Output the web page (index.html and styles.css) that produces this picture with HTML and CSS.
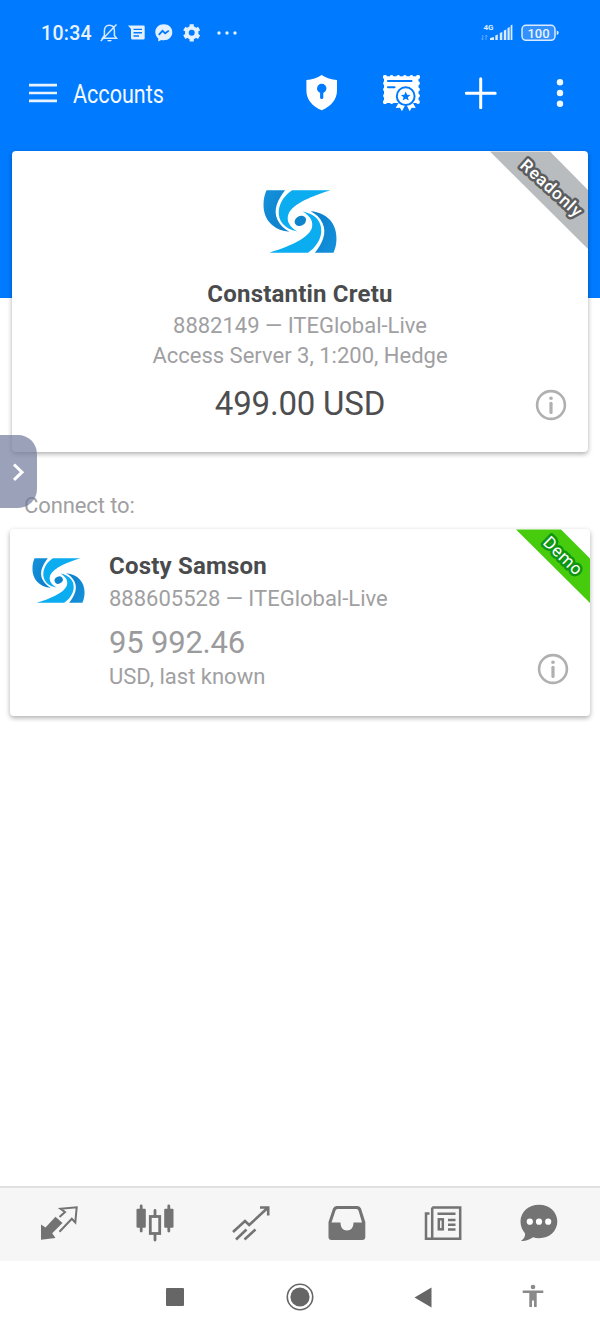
FILE: index.html
```html
<!DOCTYPE html>
<html lang="en">
<head>
<meta charset="utf-8">
<title>Accounts</title>
<link rel="stylesheet" href="styles.css">
</head>
<body>
<svg width="0" height="0" class="defs">
  <defs>
    <linearGradient id="dk" x1="0" y1="0" x2="1" y2="1"><stop offset="0" stop-color="#1592dc"/><stop offset="1" stop-color="#0a7cc8"/></linearGradient>
    <g id="half">
      <path fill="url(#dk)" d="M79 45H135C113 73 98 104 112 134C120 151 132 162 148 170C98 166 69 132 70 88C70 70 74 56 79 45Z"/>
      <path fill="#0badf0" d="M156 45H272C221 61 159 84 145 117C138 137 148 155 172 169C134 162 113 138 116 106C119 81 134 60 156 45Z"/>
    </g>
    <symbol id="logo" viewBox="69 44 222 190">
      <use href="#half"/>
      <use href="#half" transform="rotate(180 180 139)"/>
      <ellipse cx="180" cy="138" rx="27" ry="22" fill="#fff" transform="rotate(-30 180 138)"/>
      <ellipse cx="181" cy="137" rx="18" ry="14.500" fill="#0d84cc" transform="rotate(-30 181 137)"/>
    </symbol>
    <symbol id="info" viewBox="0 0 32 32">
      <circle cx="16" cy="16" r="13.900" fill="none" stroke="#b0b0b0" stroke-width="2.600"/>
      <circle cx="16" cy="9.200" r="1.800" fill="#b0b0b0"/>
      <path d="M16 14.300V23.400" stroke="#b0b0b0" stroke-width="3.200" stroke-linecap="round"/>
    </symbol>
  </defs>
</svg>
<div class="screen">
  <header class="status">
    <span class="clock">10:34</span>
    <svg class="status-icons" width="140" height="24" viewBox="100 21 140 24" fill="#e2f0ff">
      <g fill="none" stroke="#d5e9ff" stroke-width="1.500">
        <path d="M102.500 38.200H116.500L114.400 35.500V30.500C114.400 27 112.300 25.200 109.300 25.200S104.400 27.500 104.400 30.500V35.500ZM100.800 41L116.500 24.400"/>
      </g>
      <path d="M107 40h5q-2.500 3-5 0Z"/>
      <path fill-rule="evenodd" d="M128 25.500H143.500q1.200 0 1.200 1.200V38q0 1.500-1.500 1.500H132.500q-1.500 0-1.500-1.500V29ZM133.500 28.700v1.400h8.500v-1.400ZM133.500 32v1.400h8.500V32ZM133.500 35.300v1.400h5.500v-1.400Z"/>
      <path d="M163.800 24.300c-5 0-8.500 3.500-8.500 8 0 2.600 1.200 4.700 3 6.200v3l3-1.500c.8.200 1.700.3 2.500.3 5 0 8.500-3.500 8.500-8s-3.500-8-8.500-8Z"/>
      <path d="M158.800 34.800l3.700-4 2.700 2.500 3.600-2.700" fill="none" stroke="#007aff" stroke-width="1.800"/>
      <circle cx="191.700" cy="32.800" r="4.900" fill="none" stroke="#e2f0ff" stroke-width="3.800"/>
      <path d="M191.700 24.200v3M191.700 38.400v3M184.300 28.500l2.500 1.500M196.600 35.600l2.500 1.500M184.300 37.100l2.500-1.500M196.600 30l2.500-1.500" stroke="#e2f0ff" stroke-width="4.200"/>
      <circle cx="219" cy="33" r="1.700"/><circle cx="227" cy="33" r="1.700"/><circle cx="235" cy="33" r="1.700"/>
    </svg>
    <svg class="signal" width="80" height="24" viewBox="480 21 80 24" fill="#d9ebff">
      <text x="483.500" y="29.700" class="net">4G</text>
      <path d="M490 40v-2l4-1v3ZM495.300 40v-4.500l2.500-1V40ZM499.800 40v-7l2.500-1v8ZM503.800 40v-9.500l2.500-1V40ZM507.500 40V28l2.200-1V40ZM510.600 40V25.500l1.800-1V40Z"/>
      <path d="M482.800 35v5l-1.500-1.500M486 40v-5l1.500 1.500" fill="none" stroke="#7bb9ff" stroke-width=".8"/>
      <rect x="522" y="25.300" width="33" height="15" rx="4" fill="#3290ff" stroke="#d9ebff" stroke-width="1.500"/>
      <path d="M556.700 30.500q2 .3 2 2.300t-2 2.300Z"/>
      <text x="538.500" y="37.600" text-anchor="middle" class="battery">100</text>
    </svg>
  </header>
  <div class="toolbar">
    <svg class="menu" width="28" height="20" viewBox="0 0 28 20"><path d="M0 2.100H28M0 10H28M0 17.900H28" stroke="#e8f3ff" stroke-width="2.700"/></svg>
    <h1><span>Accounts</span></h1>
    <div class="actions">
      <svg width="36" height="38" viewBox="304 74 36 38"><path fill="#fff" d="M321.700 74.900Q328.500 79.200 337 80V90.500C337 99.500 331 106.500 321.700 110.200C312.300 106.500 306.400 99.500 306.400 90.500V80Q314.900 79.200 321.700 74.900Z"/><circle cx="321.700" cy="88.500" r="4.700" fill="#007aff"/><path d="M321.700 89v8.500" stroke="#007aff" stroke-width="3.200" stroke-linecap="round"/></svg>
      <svg width="40" height="38" viewBox="381 74 40 38">
        <rect x="384" y="76.300" width="34.500" height="26.700" fill="#fff"/>
        <g fill="none" stroke="#fff" stroke-width="3.800" stroke-linecap="round"><path d="M385 77H418.500M385 102H397" stroke-dasharray="0.010 6.600"/><path d="M385 77V103M418 77V103" stroke-dasharray="0.010 6.240"/></g>
        <path d="M388 81H411.500M388 87.300H394.500" stroke="#007aff" stroke-width="2.100" stroke-linecap="round"/>
        <path d="M399 102l-3.300 6 4.200-.2 2 3.400 3.500-6.500h1l3.300 6.500 2-3.400 4 .2-3.500-6.500Z" fill="#fff"/>
        <circle cx="405.700" cy="96.200" r="8.900" fill="#fff" stroke="#007aff" stroke-width="2"/>
        <path fill="#007aff" d="M405.700 91.600l1.400 3.100 3.400.3-2.600 2.200.8 3.300-3-1.700-3 1.700.8-3.300-2.600-2.200 3.400-.3Z"/>
      </svg>
      <svg width="32" height="32" viewBox="0 0 32 32"><path d="M15.700 1.800V30.800M1.200 16.300H30.200" stroke="#fff" stroke-width="3" stroke-linecap="round"/></svg>
      <svg width="8" height="30" viewBox="0 0 8 30" fill="#f2f8ff"><circle cx="4" cy="4.200" r="3.200"/><circle cx="4" cy="15" r="3.200"/><circle cx="4" cy="25.800" r="3.200"/></svg>
    </div>
  </div>
  <main>
    <section class="card current">
      <svg class="logo"><use href="#logo"/></svg>
      <h2>Constantin Cretu</h2>
      <p class="line">8882149 — ITEGlobal-Live</p>
      <p class="line second">Access Server 3, 1:200, Hedge</p>
      <p class="balance">499.00 USD</p>
      <svg class="info"><use href="#info"/></svg>
      <svg class="ribbon" width="98" height="98" viewBox="490 151 98 98"><path fill="#b9bcbe" d="M490 151.500H550L588 190V249Z"/><text class="readonly" transform="translate(551.500 188.500) rotate(42)" text-anchor="middle" y="5.500">Readonly</text></svg>
    </section>
    <p class="connect">Connect to:</p>
    <section class="card other">
      <svg class="logo"><use href="#logo"/></svg>
      <div class="details">
        <h2>Costy Samson</h2>
        <p class="line">888605528 — ITEGlobal-Live</p>
        <p class="balance">95 992.46</p>
        <p class="line known">USD, last known</p>
      </div>
      <svg class="info"><use href="#info"/></svg>
      <svg class="ribbon" width="74" height="74" viewBox="516 529 74 74"><path fill="#46cb0d" d="M516 529.500H561L590 558.500V603Z"/><text class="demo" transform="translate(563 556) rotate(44)" text-anchor="middle" y="5.500">Demo</text></svg>
    </section>
  </main>
  <nav class="tabs">
    <svg width="40" height="40" viewBox="39.500 1203 40 40"><path fill="#737373" d="M41.500 1224.500L46 1227.500 56 1216.700 63 1223 52.700 1233.300 56 1238 41.500 1239.800Z"/><path d="M60 1217L65.500 1212 61 1208.700 77.200 1207.300 75.800 1222.500 72.300 1218.700 60 1231.800" fill="none" stroke="#737373" stroke-width="2"/></svg>
    <svg width="40" height="40" viewBox="135.500 1203 40 40"><g fill="#737373"><rect x="137" y="1208.700" width="9.300" height="19" rx="1"/><rect x="164.700" y="1208.700" width="9.300" height="19" rx="1"/></g><path d="M141.700 1206V1231M169.300 1206V1231M155.500 1210.500V1216M155.500 1235V1240" stroke="#737373" stroke-width="2.800" stroke-linecap="round"/><rect x="150.800" y="1216.500" width="9.400" height="17" fill="none" stroke="#737373" stroke-width="2.800"/></svg>
    <svg width="40" height="40" viewBox="231.500 1203 40 40" fill="none" stroke="#737373" stroke-width="2.600"><path d="M233.500 1232L245.500 1221 249.700 1225 268 1208M260.500 1207.500H268.700V1215.500M236.500 1239.500L247 1229.500M245 1239.500L256 1229.500"/></svg>
    <svg width="40" height="40" viewBox="327.500 1203 40 40"><path fill="#737373" fill-rule="evenodd" d="M337 1206H358Q360.500 1206 361.500 1208.500L365.800 1222V1237Q365.800 1240 362.800 1240H332Q329 1240 329 1237V1222L333.500 1208.500Q334.500 1206 337 1206ZM338 1209Q336.500 1209 336 1210.500L332 1222.500H341C341 1227.500 343.500 1230.500 347.500 1230.500S354 1227.500 354 1222.500H362.500L359 1210.500Q358.500 1209 357 1209Z"/></svg>
    <svg width="40" height="40" viewBox="423.500 1203 40 40" fill="none" stroke="#737373" stroke-width="2.500"><path d="M432.700 1207.500H460.700V1238.700H426.500V1213.500H430M432.700 1207.500V1238.700"/><path d="M438 1213.700H456M448.500 1220H456M448.500 1224.700H456M448.500 1229.500H456"/><rect x="439.300" y="1219.300" width="4" height="10"/></svg>
    <svg width="40" height="40" viewBox="519.500 1203 40 40"><path fill="#737373" d="M539.500 1204.700C550 1204.700 557.800 1212 557.800 1221.500S550 1238.200 539.500 1238.200Q536.500 1238.200 533.500 1237.300C530 1240 525.500 1241.400 521.500 1241Q526 1237.500 525.600 1233.500C522.700 1230 521 1226 521 1221.500 521 1212 529 1204.700 539.500 1204.700Z"/><g fill="#fff"><circle cx="530.300" cy="1221.700" r="3.100"/><circle cx="539.500" cy="1221.700" r="3.100"/><circle cx="548.700" cy="1221.700" r="3.100"/></g></svg>
  </nav>
  <footer class="system">
    <svg width="18" height="18"><rect width="18" height="18" rx="1" fill="#666"/></svg>
    <svg width="28" height="28"><circle cx="14" cy="14" r="12.700" fill="none" stroke="#666" stroke-width="1.600"/><circle cx="14" cy="14" r="9.600" fill="#666"/></svg>
    <svg width="18" height="21"><path d="M17.500.5V20.500L.5 10.500Z" fill="#666"/></svg>
    <svg class="person" width="22" height="24" viewBox="0 0 22 24" fill="#8a8a8a"><circle cx="11" cy="3" r="2.300"/><path d="M.7 6.500H21.300V9H14.700V23H12V16.500H10V23H7.300V9H.7Z"/></svg>
  </footer>
  <button class="drawer" aria-label="Open sidebar"><svg width="14" height="20" viewBox="0 0 14 20"><path d="M3 2.500L11 10.200 3 17.800" fill="none" stroke="#fff" stroke-width="3"/></svg></button>
</div>
</body>
</html>
```
FILE: styles.css
```css
* { box-sizing: border-box; }
body, h1, h2, p { margin: 0; }
body { background: #fff; font-family: Roboto, "Liberation Sans", sans-serif; }
svg { display: block; flex: none; }
.defs { position: absolute; }
.screen { position: relative; width: 600px; height: 1333px; display: flex; flex-direction: column; background: linear-gradient(#007aff 298px, #fff 298px); }
.status { height: 66px; display: flex; align-items: center; padding: 0 40px 0 41px; }
.clock { width: 59px; color: #e8f3ff; font-size: 19.5px; font-weight: 500; letter-spacing: .3px; }
.signal { margin-left: auto; }
.net { font-size: 8px; font-weight: 700; }
.battery { font-size: 13px; font-weight: 500; fill: #e8f3ff; }
.toolbar { height: 54px; display: flex; align-items: center; padding-left: 29px; }
.menu { margin-right: 16px; }
h1 { width: 209px; color: #f4f9ff; font-size: 26px; font-weight: 400; line-height: 54px; padding-top: 2px; }
h1 span { display: inline-block; transform: scaleX(.83); transform-origin: left; }
.actions { flex: 1; display: grid; grid-template-columns: repeat(4, 79.500px); justify-items: center; align-items: center; }
main { flex: 1; padding: 31px 10px 0; }
.card { position: relative; background: #fff; border-radius: 4px; box-shadow: 0 2px 5px rgba(0, 0, 0, .32); }
.current { height: 301px; margin: 0 2px; padding-top: 39px; display: flex; flex-direction: column; align-items: center; }
.current .logo { width: 74px; height: 63px; }
h2 { color: #4a4b4d; font-size: 24px; line-height: 30px; font-weight: 700; letter-spacing: .2px; white-space: nowrap; }
.current h2 { margin-top: 26px; }
.line { color: #a0a0a2; font-size: 22px; line-height: 30px; white-space: nowrap; }
.current .line { margin-top: 2px; }
.current .second { margin-top: 0; }
.balance { color: #4e4e50; font-size: 33px; line-height: 40px; letter-spacing: -.2px; white-space: nowrap; }
.current .balance { margin-top: 13px; }
.info { position: absolute; width: 32px; height: 32px; right: 21px; bottom: 31px; }
.ribbon { position: absolute; top: 0; right: 0; }
.ribbon text { fill: #fff; paint-order: stroke; stroke-linejoin: round; }
.readonly { font-size: 17px; font-weight: 500; letter-spacing: .9px; stroke: #5c5d5f; stroke-width: 5px; }
.demo { font-size: 17px; font-weight: 400; letter-spacing: .7px; stroke: #0d9612; stroke-width: 5px; }
.connect { margin: 38px 0 8px 14px; color: #a0a0a2; font-size: 22px; line-height: 31px; letter-spacing: -.1px; }
.other { height: 187px; padding: 22px; display: flex; gap: 24px; }
.other .logo { width: 53px; height: 45px; margin-top: 7px; }
.other .line { margin-top: 3px; }
.other .balance { color: #9b9b9d; font-size: 31px; margin-top: 11px; line-height: 36px; }
.other .known { margin-top: 1px; }
.tabs { height: 75px; padding: 0 12px 3px 11px; border-top: 2px solid #e0e0e0; background: #f6f6f6; display: grid; grid-template-columns: repeat(6, 96px); justify-items: center; align-items: center; }
.system { height: 72px; display: grid; grid-template-columns: 237.500px 124px 122px 99px; align-items: center; justify-items: center; background: #fff; }
.system svg:first-child { margin-left: 113px; }
.person { margin-bottom: 3px; }
.drawer { position: absolute; left: 0; top: 435px; width: 37px; height: 73px; border: 0; padding: 0 0 0 11px; border-radius: 0 19px 19px 0; background: rgba(112, 121, 155, .7); display: flex; align-items: center; }
```
